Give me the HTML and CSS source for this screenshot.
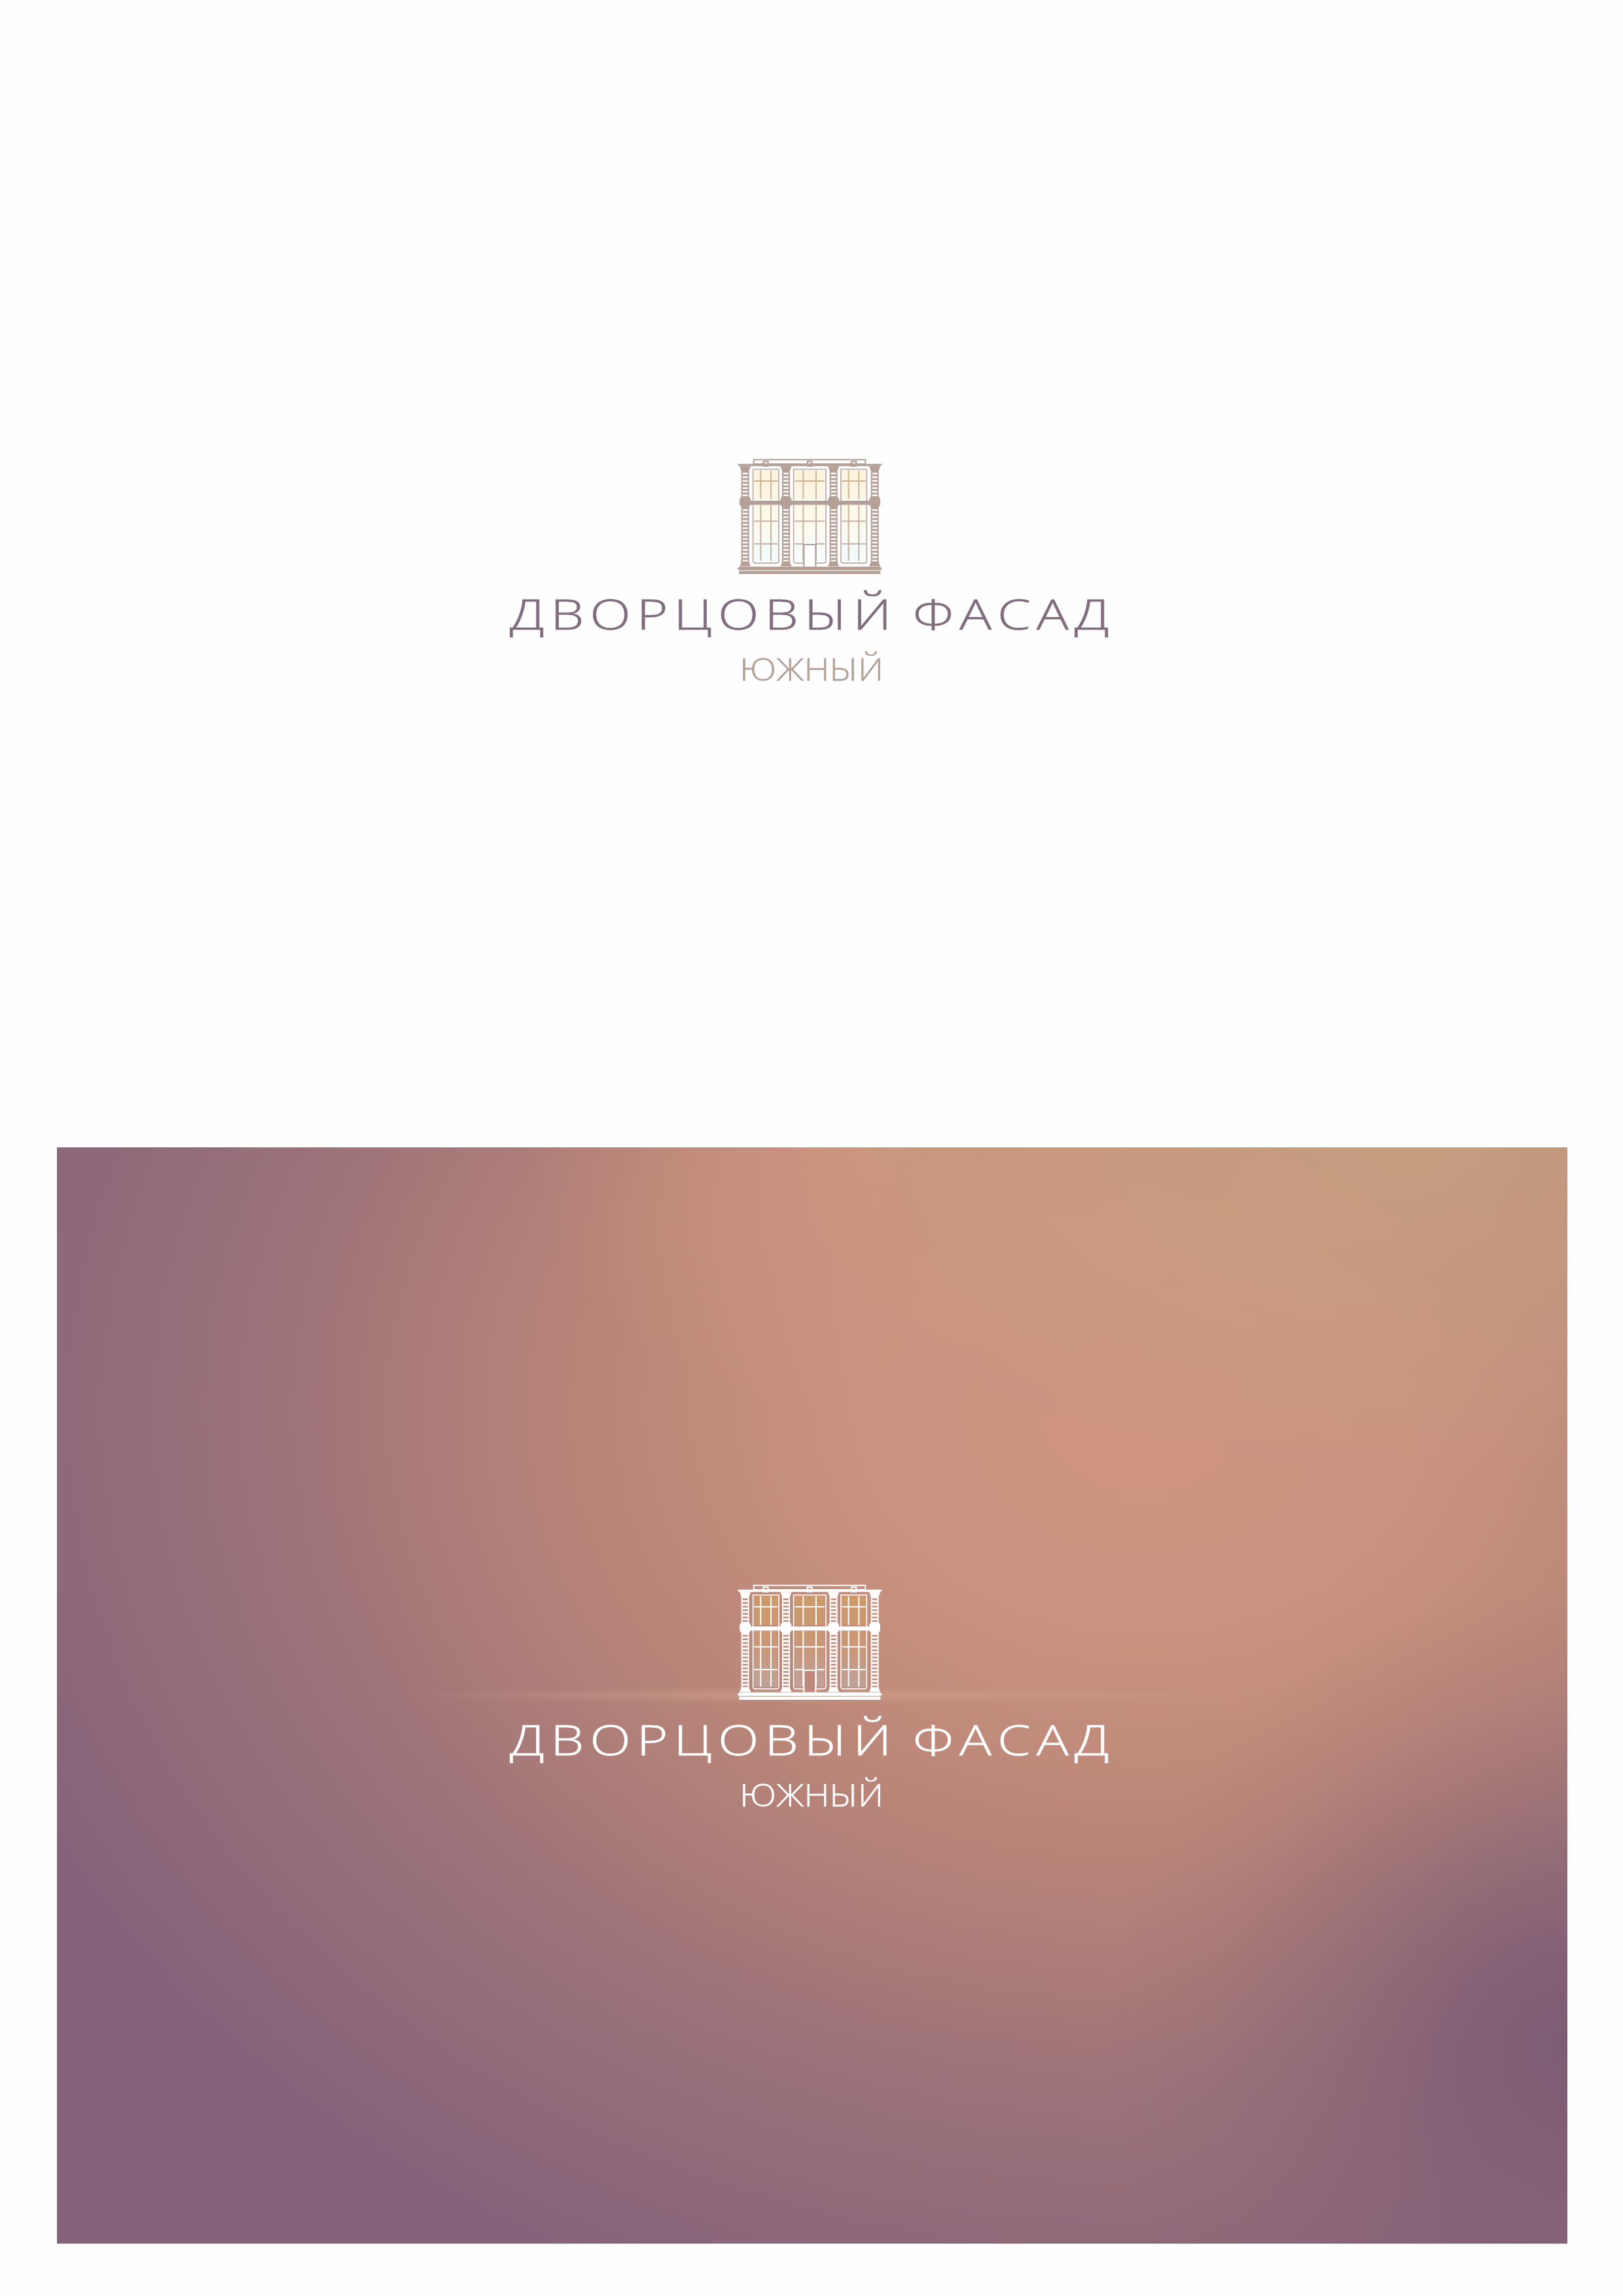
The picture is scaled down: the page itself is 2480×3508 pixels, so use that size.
FILE: index.html
```html
<!DOCTYPE html>
<html lang="ru">
<head>
<meta charset="utf-8">
<title>Дворцовый фасад</title>
<link rel="stylesheet" href="styles.css">
</head>
<body>
<svg class="defs" aria-hidden="true">
  <defs>
    <linearGradient id="glass-light" gradientUnits="userSpaceOnUse" x1="0" y1="115" x2="0" y2="532">
      <stop offset="0" stop-color="#fdf3dc"/><stop offset=".55" stop-color="#fef9ec"/><stop offset="1" stop-color="#f3fbfd"/>
    </linearGradient>
    <linearGradient id="mull-light" gradientUnits="userSpaceOnUse" x1="0" y1="115" x2="0" y2="532">
      <stop offset="0" stop-color="#cfb896"/><stop offset="1" stop-color="#bdb0a8"/>
    </linearGradient>
    <linearGradient id="glass-dark" gradientUnits="userSpaceOnUse" x1="0" y1="115" x2="0" y2="532">
      <stop offset="0" stop-color="#cd9a68"/><stop offset=".6" stop-color="#c8977a"/><stop offset="1" stop-color="#bfa29c"/>
    </linearGradient>
    <g id="column">
      <path class="st" d="M-26 97H26L18 117H-18Z"/>
      <rect class="rail" x="-15" y="117" width="30" height="120"/>
      <line class="rung" x1="0" y1="118" x2="0" y2="236"/>
      <rect class="st" x="-25" y="236" width="50" height="48" rx="14"/>
      <rect class="rail" x="-15" y="284" width="30" height="252"/>
      <line class="rung" x1="0" y1="285" x2="0" y2="535"/>
      <path class="st" d="M-18 534H18L21 546 26 556H-26L-21 546Z"/>
    </g>
    <g id="window-side">
      <path class="frame" d="M0 111H118V531A10 10 0 0 1 108 541H10A10 10 0 0 1 0 531Z"/>
      <rect class="glass" x="5" y="116" width="108" height="132"/>
      <rect class="glass" x="5" y="275" width="108" height="257" rx="8"/>
      <path class="mull" d="M35 116V248M82 116V248M35 275V530M82 275V530M5 349H113M5 453H113"/>
      <path class="mull-strong" d="M5 165H113"/>
    </g>
    <symbol id="facade" viewBox="0 0 840 600">
      <rect class="rail" x="155" y="67" width="512" height="20"/>
      <rect class="rail" x="199" y="75" width="22" height="21"/>
      <rect class="rail" x="401" y="75" width="21" height="21"/>
      <rect class="rail" x="603" y="75" width="22" height="21"/>
      <path class="st" d="M80 86H744L736 97H88Z"/>
      <use href="#window-side" x="152"/>
      <use href="#window-side" x="555"/>
      <path class="frame" d="M388 541H348A10 10 0 0 1 338 531V111H486V531A10 10 0 0 1 476 541H436"/>
      <rect class="glass" x="344" y="116" width="136" height="132"/>
      <path class="glass" d="M344 275H480V524A8 8 0 0 1 472 532H436V458H388V532H352A8 8 0 0 1 344 524Z"/>
      <path class="mull" d="M382 116V248M441 116V248M382 275V530M441 275V530M344 349H480M344 453H385M439 453H480"/>
      <path class="mull-strong" d="M344 165H480"/>
      <path class="rail" d="M385 560V456H439V560"/>
      <use href="#column" x="116"/>
      <use href="#column" x="303"/>
      <use href="#column" x="521"/>
      <use href="#column" x="710"/>
      <rect class="st" x="90" y="255" width="645" height="19"/>
      <path class="st" d="M80 566L90 557H734L744 566 736 574H88Z"/>
      <rect class="st" x="88" y="577" width="648" height="14"/>
    </symbol>
  </defs>
</svg>
<main class="sheet">
  <section class="plate plate-light">
    <div class="lockup">
      <svg class="facade" role="img" aria-label="Фасад"><use href="#facade"/></svg>
      <h1 class="title">ДВОРЦОВЫЙ ФАСАД</h1>
      <p class="subtitle">ЮЖНЫЙ</p>
    </div>
  </section>
  <section class="plate plate-dark">
    <div class="lockup">
      <svg class="facade" role="img" aria-label="Фасад"><use href="#facade"/></svg>
      <h1 class="title">ДВОРЦОВЫЙ ФАСАД</h1>
      <p class="subtitle">ЮЖНЫЙ</p>
    </div>
  </section>
</main>
</body>
</html>
```
FILE: styles.css
```css
* { box-sizing: border-box; }
html, body { margin: 0; padding: 0; background: #fefefe; }
.defs { display: block; width: 0; height: 0; }
.sheet { width: 2480px; height: 3508px; display: flex; flex-direction: column; }

.plate { display: flex; justify-content: center; }
.plate-light {
  height: 1753px;
  padding-top: 680px;
  --st: #b4a097;
  --frame: #b9a69d;
  --glass: url(#glass-light);
  --mull: url(#mull-light);
  --mull-strong: #cbb08b;
  --title: #816d7e;
  --sub: #b4a196;
}
.plate-dark {
  margin-left: 87px;
  width: 2308px;
  height: 1675px;
  padding: 647px 2px 0 0;
  --st: #fff;
  --frame: #fff;
  --glass: url(#glass-dark);
  --mull: #fff;
  --mull-strong: #fff;
  --title: #fff;
  --sub: #fff;
  background:
    radial-gradient(ellipse 640px 12px at 50% 837px, rgba(212, 170, 145, .5), rgba(212, 170, 145, 0)),
    radial-gradient(ellipse 700px 700px at 100% 82%, rgba(124, 92, 116, 1) 0%, rgba(124, 92, 116, .8) 20%, rgba(124, 92, 116, .4) 50%, rgba(124, 92, 116, .12) 78%, rgba(124, 92, 116, 0) 100%),
    radial-gradient(ellipse 1000px 500px at 90% 0%, rgba(198, 160, 128, .9), rgba(198, 160, 128, .45) 55%, rgba(198, 160, 128, 0)),
    radial-gradient(ellipse 520px 420px at 54% 0%, rgba(208, 150, 128, .85), rgba(208, 150, 128, 0)),
    radial-gradient(ellipse 1950px 1520px at 72% 24%, #cf9580 0%, #cc9480 20%, #b98578 44%, #9d7379 68%, #85637a 96%);
}

.lockup { display: flex; flex-direction: column; align-items: center; width: 960px; }
.facade { display: block; width: 280px; height: 200px; }

.title, .subtitle {
  margin: 0;
  font-family: "Open Sans", "Noto Sans", sans-serif;
  font-weight: 300;
  line-height: 1;
  white-space: nowrap;
}
.title {
  margin-top: 25px;
  padding-left: 2px;
  font-size: 65px;
  letter-spacing: 7px;
  word-spacing: -5px;
  color: var(--title);
  -webkit-text-stroke: .6px var(--title);
  transform: scaleX(1.26);
}
.subtitle {
  margin-top: 28px;
  font-size: 48px;
  color: var(--sub);
  -webkit-text-stroke: .5px var(--sub);
  transform: scaleX(1.13);
}

.st { fill: var(--st); }
.rail { fill: none; stroke: var(--st); stroke-width: 6; }
.rung { stroke: var(--st); stroke-width: 26; stroke-dasharray: 9 7.6; }
.frame { fill: none; stroke: var(--frame); stroke-width: 5; }
.glass { fill: var(--glass); }
.mull { fill: none; stroke: var(--mull); stroke-width: 6; }
.mull-strong { fill: none; stroke: var(--mull-strong); stroke-width: 6; }
```
